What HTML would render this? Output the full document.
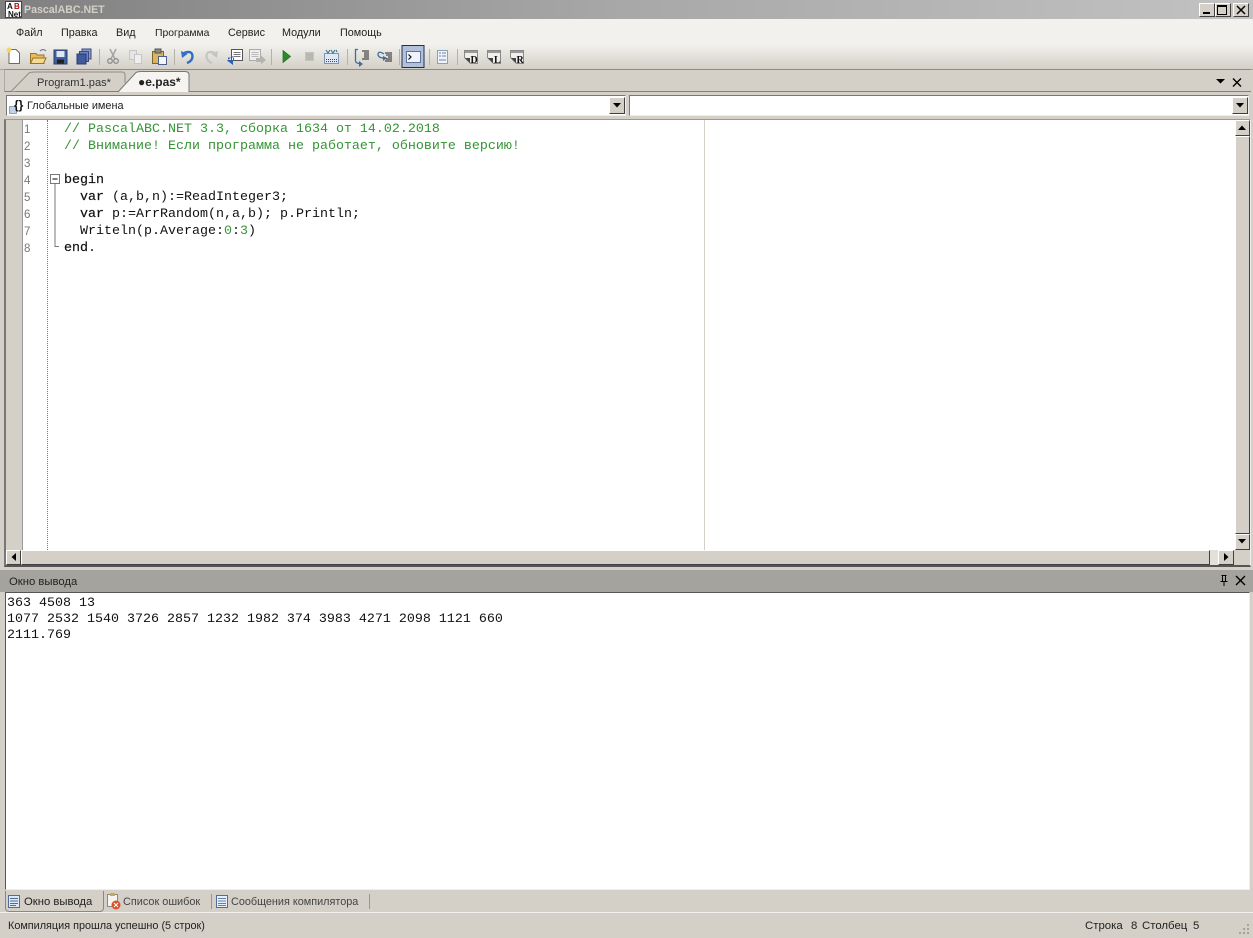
<!DOCTYPE html>
<html><head><meta charset="utf-8"><title>PascalABC.NET</title>
<style>
html,body{margin:0;padding:0}
body{width:1253px;height:938px;position:relative;overflow:hidden;background:#d4d0c8;font-family:"Liberation Sans",sans-serif;font-size:11px;color:#222}
.a{position:absolute}
.t{position:absolute;white-space:nowrap;line-height:14px}
.m{position:absolute;white-space:pre;font-family:"Liberation Mono",monospace;font-size:13.33px;line-height:16px;color:#111}
.m b{font-weight:normal;-webkit-text-stroke:.2px #111}
.g{color:#359535}
.n{position:absolute;left:24px;font-family:"Liberation Sans",sans-serif;font-size:11.5px;color:#777;line-height:14px}
.btn{position:absolute;background:#d4d0c8;border:1px solid;border-color:#fff #404040 #404040 #fff;box-sizing:border-box}
svg{position:absolute;overflow:visible}
</style></head><body>

<!-- title bar -->
<div class="a" style="left:0;top:0;width:1253px;height:19px;background:linear-gradient(90deg,#808080,#a8a8a8 50%,#c2c2c2)"></div>
<svg style="left:5px;top:1px" width="17" height="17" viewBox="0 0 17 17"><rect width="17" height="17" fill="#fff"/><rect x=".5" y=".5" width="16" height="16" fill="none" stroke="#444"/><text x="2" y="8" font-size="8" font-weight="bold" font-family="Liberation Sans" fill="#111">A</text><text x="9" y="8" font-size="8" font-weight="bold" font-family="Liberation Sans" fill="#a11">B</text><text x="3" y="16" font-size="8" font-weight="bold" font-family="Liberation Sans" fill="#111">Net</text></svg>
<div class="t" style="left:24px;top:3px;color:#d4d0c8;font-weight:bold;font-size:10.6px">PascalABC.NET</div>
<div class="btn" style="left:1199px;top:3px;width:16px;height:14px"></div><div class="a" style="left:1203px;top:12px;width:7px;height:2px;background:#000"></div>
<div class="btn" style="left:1215px;top:3px;width:16px;height:14px"></div><div class="a" style="left:1217px;top:5px;width:8px;height:7px;border:1px solid #000;border-top-width:2px"></div>
<div class="btn" style="left:1233px;top:3px;width:16px;height:14px"></div><svg style="left:1237px;top:6px" width="8" height="8"><path d="M0 0L8 8M8 0L0 8" stroke="#000" stroke-width="1.5"/></svg>

<!-- menu -->
<div class="a" style="left:0;top:19px;width:1253px;height:25px;background:#f2f1ed"></div>
<div class="t" style="left:16px;top:26px;font-size:10.8px">Файл</div>
<div class="t" style="left:61px;top:26px;font-size:10.8px">Правка</div>
<div class="t" style="left:116px;top:26px;font-size:10.8px">Вид</div>
<div class="t" style="left:155px;top:27px;font-size:10.4px">Программа</div>
<div class="t" style="left:228px;top:26px;font-size:10.8px">Сервис</div>
<div class="t" style="left:282px;top:26px;font-size:10.8px">Модули</div>
<div class="t" style="left:340px;top:26px;font-size:10.8px">Помощь</div>

<!-- toolbar -->
<div class="a" style="left:0;top:44px;width:1253px;height:25px;background:linear-gradient(180deg,#f3f2ee,#e4e2dc 45%,#d4d0c8);border-bottom:1px solid #a8a59c"></div>
<svg style="left:0;top:44px" width="530" height="25" viewBox="0 0 530 25">
 <!-- new -->
 <path d="M9 5.500H16L19.500 9V19.500H9Z" fill="#fff" stroke="#6f6b5e"/><circle cx="9" cy="6" r="2.500" fill="#f5d56a"/>
 <!-- open -->
 <path d="M30.500 9.500H36L37 11H44V19.500H30.500Z" fill="#e9bd5a" stroke="#94742a"/><path d="M33 14H46L43.500 19.500H30.500Z" fill="#f6d98c" stroke="#94742a"/><path d="M40 7Q43 4 46 7" stroke="#5a6f9f" fill="none"/>
 <!-- save -->
 <rect x="54" y="6" width="13" height="14" fill="#3f5f9f" stroke="#2a3f70"/><rect x="56.500" y="7" width="8" height="6" fill="#dfe6f2"/><rect x="57" y="15.500" width="7" height="4" fill="#222"/>
 <!-- save all -->
 <rect x="82" y="5" width="9" height="10" fill="#8a9ccc" stroke="#3a4a80"/><rect x="79.500" y="7.500" width="9" height="10" fill="#6f86bd" stroke="#3a4a80"/><rect x="77" y="10" width="9" height="10" fill="#3f5a9c" stroke="#2a3a70"/>
 <path d="M99.500 5V21" stroke="#b5b2a8"/>
 <!-- cut -->
 <path d="M110 5L115 15M116 5L111 15" stroke="#a5a5a5" stroke-width="1.500" fill="none"/><circle cx="110" cy="17" r="2.300" fill="none" stroke="#8d8d8d" stroke-width="1.300"/><circle cx="116" cy="17" r="2.300" fill="none" stroke="#8d8d8d" stroke-width="1.300"/>
 <!-- copy -->
 <rect x="129.500" y="6.500" width="7" height="9" fill="#e5e5e5" stroke="#c5c5c5"/><rect x="134.500" y="10.500" width="7" height="9" fill="#eee" stroke="#c5c5c5"/>
 <!-- paste -->
 <rect x="152.500" y="7.500" width="11" height="12" fill="#dcb45c" stroke="#7d6530"/><rect x="155" y="5" width="6" height="4" fill="#8d8d80" stroke="#555"/><rect x="158.500" y="12.500" width="8" height="8" fill="#f3f5fa" stroke="#4b5f8a"/>
 <path d="M174.500 5V21" stroke="#b5b2a8"/>
 <!-- undo -->
 <path d="M184 9Q192 6 192.500 12Q192.500 17 187 19" fill="none" stroke="#2f6fc4" stroke-width="2.400"/><path d="M181 7L182 14L187.500 10Z" fill="#2f6fc4"/>
 <!-- redo -->
 <path d="M215 9Q207 6 206.500 12Q206.500 17 212 19" fill="none" stroke="#c5c5c0" stroke-width="2.200"/><path d="M218 7L217 14L211.500 10Z" fill="#c5c5c0"/>
 <!-- bookmarks -->
 <rect x="231.500" y="5.500" width="11" height="11" fill="#fff" stroke="#555"/><path d="M233.500 8.500H240.500M233.500 10.500H240.500M233.500 12.500H240.500" stroke="#777"/><path d="M228 16H234V13.500L228 13.500ZM233 12V21L227 16.500Z" fill="#2b62b8"/>
 <rect x="249.500" y="5.500" width="11" height="11" fill="#eee" stroke="#aaa"/><path d="M251.500 8.500H258.500M251.500 10.500H258.500M251.500 12.500H258.500" stroke="#bbb"/><path d="M256 14H261V11.500L266 16L261 20.500V18H256Z" fill="#b5b5b0"/>
 <path d="M271.500 5V21" stroke="#b5b2a8"/>
 <!-- run -->
 <path d="M283 6.500L290.500 12.500L283 18.500Z" fill="#2b8a2b" stroke="#1d6a1d" stroke-width=".7"/>
 <!-- stop -->
 <rect x="305.500" y="8.500" width="8" height="8" fill="#b8b8b2" stroke="#c5c5c0"/>
 <!-- build -->
 <rect x="324.500" y="9.500" width="14" height="10" fill="#dfe8f5" stroke="#7f93b8"/><path d="M326 6L328 9L330 6M331 6L333 9L335 6M336 6L337 8" stroke="#2f6a9a" fill="none"/><path d="M326 15.500H337M326 17.500H337" stroke="#444" stroke-dasharray="1 1"/>
 <path d="M347.500 5V21" stroke="#b5b2a8"/>
 <!-- step -->
 <path d="M358 5.500H355.500V17Q356 19.500 360 19.500" fill="none" stroke="#3e6f9c" stroke-width="1.300"/><path d="M359 17L363 20L359 23Z" fill="#3e6f9c"/><path d="M362 7H369M364 9H369M364 11H369M364 13H369M362 15H369" stroke="#222"/>
 <path d="M384 10Q378 6 378 11Q379 14 384 14" fill="none" stroke="#3e6f9c" stroke-width="1.300"/><path d="M383 12L387 14L383 17Z" fill="#3e6f9c"/><path d="M385 9H392M386 11H392M388 13H392M386 15H392M385 17H392" stroke="#222"/>
 <path d="M399.500 5V21" stroke="#b5b2a8"/>
 <!-- output toggle -->
 <rect x="402" y="1.500" width="22" height="22" fill="#b3c0da" stroke="#1c2f55"/>
 <rect x="406.500" y="7.500" width="14" height="11" fill="#f0f3fb" stroke="#5d7397"/><path d="M408.500 10.500L411 13L408.500 15.500" fill="none" stroke="#111" stroke-width="1.200"/>
 <path d="M429.500 5V21" stroke="#b5b2a8"/>
 <rect x="437.500" y="6.500" width="10" height="13" fill="#eef3fa" stroke="#8aa0bd"/><path d="M439 9H441M442 9H446M442 12H446M439 12H441M439 16H446" stroke="#6c86a8"/>
 <path d="M457.500 5V21" stroke="#b5b2a8"/>
 <!-- D L R -->
 <g>
  <path d="M464.500 6.500H477.500V19.500H470.500L464.500 13.500Z" fill="#f0efec" stroke="#888"/><path d="M465 7H477V9H465Z" fill="#999"/><path d="M465 14L470 19V14Z" fill="#444"/>
  <text x="470.500" y="19" font-size="10" font-weight="bold" font-family="Liberation Serif" fill="#111">D</text>
  <path d="M487.500 6.500H500.500V19.500H493.500L487.500 13.500Z" fill="#f0efec" stroke="#888"/><path d="M488 7H500V9H488Z" fill="#999"/><path d="M488 14L493 19V14Z" fill="#444"/>
  <text x="494" y="19" font-size="10" font-weight="bold" font-family="Liberation Serif" fill="#111">L</text>
  <path d="M510.500 6.500H523.500V19.500H516.500L510.500 13.500Z" fill="#f0efec" stroke="#888"/><path d="M511 7H523V9H511Z" fill="#999"/><path d="M511 14L516 19V14Z" fill="#444"/>
  <text x="516.500" y="19" font-size="10" font-weight="bold" font-family="Liberation Serif" fill="#111">R</text>
 </g>
</svg>

<!-- tabs strip -->
<div class="a" style="left:4px;top:69px;width:1247px;height:23px;border-top:1px solid #8f8c84;border-bottom:1px solid #808080;box-sizing:border-box;border-left:1px solid #aaa"></div>
<svg style="left:0;top:69px" width="200" height="24" viewBox="0 0 200 24">
 <path d="M11 22.500L29 4Q31 3 35 3H122Q125 3 125 6L125 14" fill="#d4d0c8" stroke="#8f8c84"/>
 <path d="M118 23L136 3.500Q138 2.500 141 2.500H185Q189 2.500 189 6V23" fill="#f5f4f1" stroke="#777"/>
</svg>
<div class="t" style="left:37px;top:76px;font-size:11.1px;color:#333">Program1.pas*</div>
<div class="t" style="left:138px;top:75px;font-size:12px;font-weight:bold;color:#222">●e.pas*</div>
<svg style="left:1216px;top:78px" width="22" height="10"><path d="M0 1H9L4.500 5.500Z" fill="#000"/><path d="M17 .5L25 8.500M25 .5L17 8.500" stroke="#000" stroke-width="1.400"/></svg>

<!-- combo row -->
<div class="a" style="left:6px;top:95px;width:620px;height:21px;background:#fff;border:1px solid #777;border-right-color:#eee;border-bottom-color:#eee;box-sizing:border-box"></div>
<div class="btn" style="left:609px;top:97px;width:16px;height:17px"></div><svg style="left:613px;top:103px" width="9" height="5"><path d="M0 0H8L4 4.500Z" fill="#000"/></svg>
<div class="a" style="left:629px;top:95px;width:620px;height:21px;background:#fff;border:1px solid #777;border-right-color:#eee;border-bottom-color:#eee;box-sizing:border-box"></div>
<div class="btn" style="left:1232px;top:97px;width:16px;height:17px"></div><svg style="left:1236px;top:103px" width="9" height="5"><path d="M0 0H8L4 4.500Z" fill="#000"/></svg>
<div class="a" style="left:9px;top:106px;width:8px;height:8px;background:#c3d1e6;border:1px solid #8fa3c0;box-sizing:border-box"></div>
<div class="t" style="left:14px;top:98px;font-size:12px;font-weight:bold;color:#111">{}</div>
<div class="t" style="left:27px;top:99px;font-size:10.9px;color:#222">Глобальные имена</div>

<!-- editor -->
<div class="a" style="left:4px;top:119px;width:1247px;height:448px;background:#fff;border-top:1px solid #999;border-left:2px solid #777;border-right:1px solid #eee;border-bottom:2px solid #555;box-sizing:border-box"></div>
<div class="a" style="left:6px;top:120px;width:16px;height:445px;background:#d4d0c8;border-right:1px solid #999"></div>
<div class="a" style="left:47px;top:120px;height:430px;border-left:1px dotted #777"></div>
<div class="a" style="left:704px;top:120px;width:1px;height:430px;background:#d4d0c8"></div>
<div class="n" style="top:123px">1</div><div class="n" style="top:140px">2</div><div class="n" style="top:157px">3</div><div class="n" style="top:174px">4</div><div class="n" style="top:191px">5</div><div class="n" style="top:208px">6</div><div class="n" style="top:225px">7</div><div class="n" style="top:242px">8</div>
<svg style="left:50px;top:174px" width="12" height="76"><rect x=".5" y=".5" width="9" height="9" fill="#fff" stroke="#777"/><path d="M2.500 5H7.500" stroke="#000"/><path d="M5 10V72.500H9" stroke="#777" fill="none"/></svg>
<div class="m g" style="left:64px;top:122px">// PascalABC.NET 3.3, сборка 1634 от 14.02.2018</div>
<div class="m g" style="left:64px;top:139px">// Внимание! Если программа не работает, обновите версию!</div>
<div class="m" style="left:64px;top:173px"><b>begin</b></div>
<div class="m" style="left:80px;top:190px"><b>var</b> (a,b,n):=ReadInteger3;</div>
<div class="m" style="left:80px;top:207px"><b>var</b> p:=ArrRandom(n,a,b); p.Println;</div>
<div class="m" style="left:80px;top:224px">Writeln(p.Average:<span class="g">0</span>:<span class="g">3</span>)</div>
<div class="m" style="left:64px;top:241px"><b>end</b>.</div>

<!-- vertical scrollbar -->
<div class="a" style="left:1235px;top:120px;width:15px;height:430px;background:#d4d0c8"></div>
<div class="btn" style="left:1235px;top:120px;width:15px;height:16px"></div><svg style="left:1238px;top:125px" width="9" height="5"><path d="M0 5H8L4 .5Z" fill="#000"/></svg>
<div class="btn" style="left:1235px;top:136px;width:15px;height:398px"></div>
<div class="btn" style="left:1235px;top:534px;width:15px;height:16px"></div><svg style="left:1238px;top:539px" width="9" height="5"><path d="M0 0H8L4 4.500Z" fill="#000"/></svg>
<!-- horizontal scrollbar -->
<div class="a" style="left:6px;top:550px;width:1244px;height:15px;background:#d4d0c8"></div>
<div class="btn" style="left:6px;top:550px;width:15px;height:15px"></div><svg style="left:11px;top:553px" width="5" height="9"><path d="M5 0V8L.5 4Z" fill="#000"/></svg>
<div class="btn" style="left:21px;top:550px;width:1189px;height:15px"></div>
<div class="a" style="left:1210px;top:550px;width:8px;height:15px;background:#e2e0db"></div>
<div class="btn" style="left:1218px;top:550px;width:16px;height:15px"></div><svg style="left:1224px;top:553px" width="5" height="9"><path d="M0 0V8L4.500 4Z" fill="#000"/></svg>

<!-- output header -->
<div class="a" style="left:0;top:570px;width:1253px;height:22px;background:#a5a39d"></div>
<div class="t" style="left:9px;top:575px;font-size:11.3px;color:#222">Окно вывода</div>
<svg style="left:1219px;top:575px" width="30" height="12"><path d="M2.500 .5H7.500M3.500 1V6M6.500 1V6M1.500 6.500H8.500M5 7V11" stroke="#000" fill="none"/><path d="M17 1L26 10M26 1L17 10" stroke="#000" stroke-width="1.400"/></svg>

<!-- output -->
<div class="a" style="left:5px;top:592px;width:1245px;height:298px;background:#fff;border:1px solid #555;border-right-color:#eee;border-bottom-color:#eee;box-sizing:border-box"></div>
<div class="m" style="left:7px;top:596px">363 4508 13</div>
<div class="m" style="left:7px;top:612px">1077 2532 1540 3726 2857 1232 1982 374 3983 4271 2098 1121 660</div>
<div class="m" style="left:7px;top:628px">2111.769</div>

<!-- bottom tabs -->
<div class="a" style="left:5px;top:891px;width:99px;height:21px;background:#d4d0c8;border:1px solid #888;border-top:none;border-radius:0 0 4px 4px;box-sizing:border-box"></div>
<svg style="left:8px;top:894px" width="360" height="16">
 <rect x=".5" y="1.500" width="11" height="12" fill="#dfe8f5" stroke="#4f6d9a"/><path d="M2 4.500H10M2 7H10M2 9.500H10M2 11.500H8" stroke="#4f6d9a"/>
 <rect x="99.500" y="0.500" width="10" height="12" fill="#f5f5f0" stroke="#888"/><rect x="102" y="-1" width="5" height="3" fill="#c9a85a"/><circle cx="108" cy="11" r="4.500" fill="#d9542c"/><path d="M106 9L110 13M110 9L106 13" stroke="#fff"/>
 <path d="M203.500 0V15" stroke="#9a978e"/>
 <rect x="208.500" y="1.500" width="11" height="12" fill="#eaf0fa" stroke="#4f6d9a"/><path d="M210 4.500H218M210 7H218M210 9.500H218M210 11.500H218" stroke="#5f7fb0"/>
 <path d="M361.500 0V15" stroke="#9a978e"/>
</svg>
<div class="t" style="left:24px;top:895px;font-size:11.3px">Окно вывода</div>
<div class="t" style="left:123px;top:895px;font-size:10.9px;color:#444">Список ошибок</div>
<div class="t" style="left:231px;top:895px;font-size:10.85px;color:#444">Сообщения компилятора</div>

<!-- status bar -->
<div class="a" style="left:0;top:912px;width:1253px;height:1px;background:#f2f1ed"></div>
<div class="t" style="left:8px;top:919px;font-size:10.85px">Компиляция прошла успешно (5 строк)</div>
<div class="t" style="left:1085px;top:919px;font-size:11.4px">Строка</div>
<div class="t" style="left:1131px;top:919px;font-size:11.4px">8</div>
<div class="t" style="left:1142px;top:919px;font-size:11.4px">Столбец</div>
<div class="t" style="left:1193px;top:919px;font-size:11.4px">5</div>
<svg style="left:1238px;top:923px" width="12" height="12"><path d="M9 1h2v2H9zM5 5h2v2H5zM9 5h2v2H9zM1 9h2v2H1zM5 9h2v2H5zM9 9h2v2H9z" fill="#a5a29a"/></svg>
</body></html>
